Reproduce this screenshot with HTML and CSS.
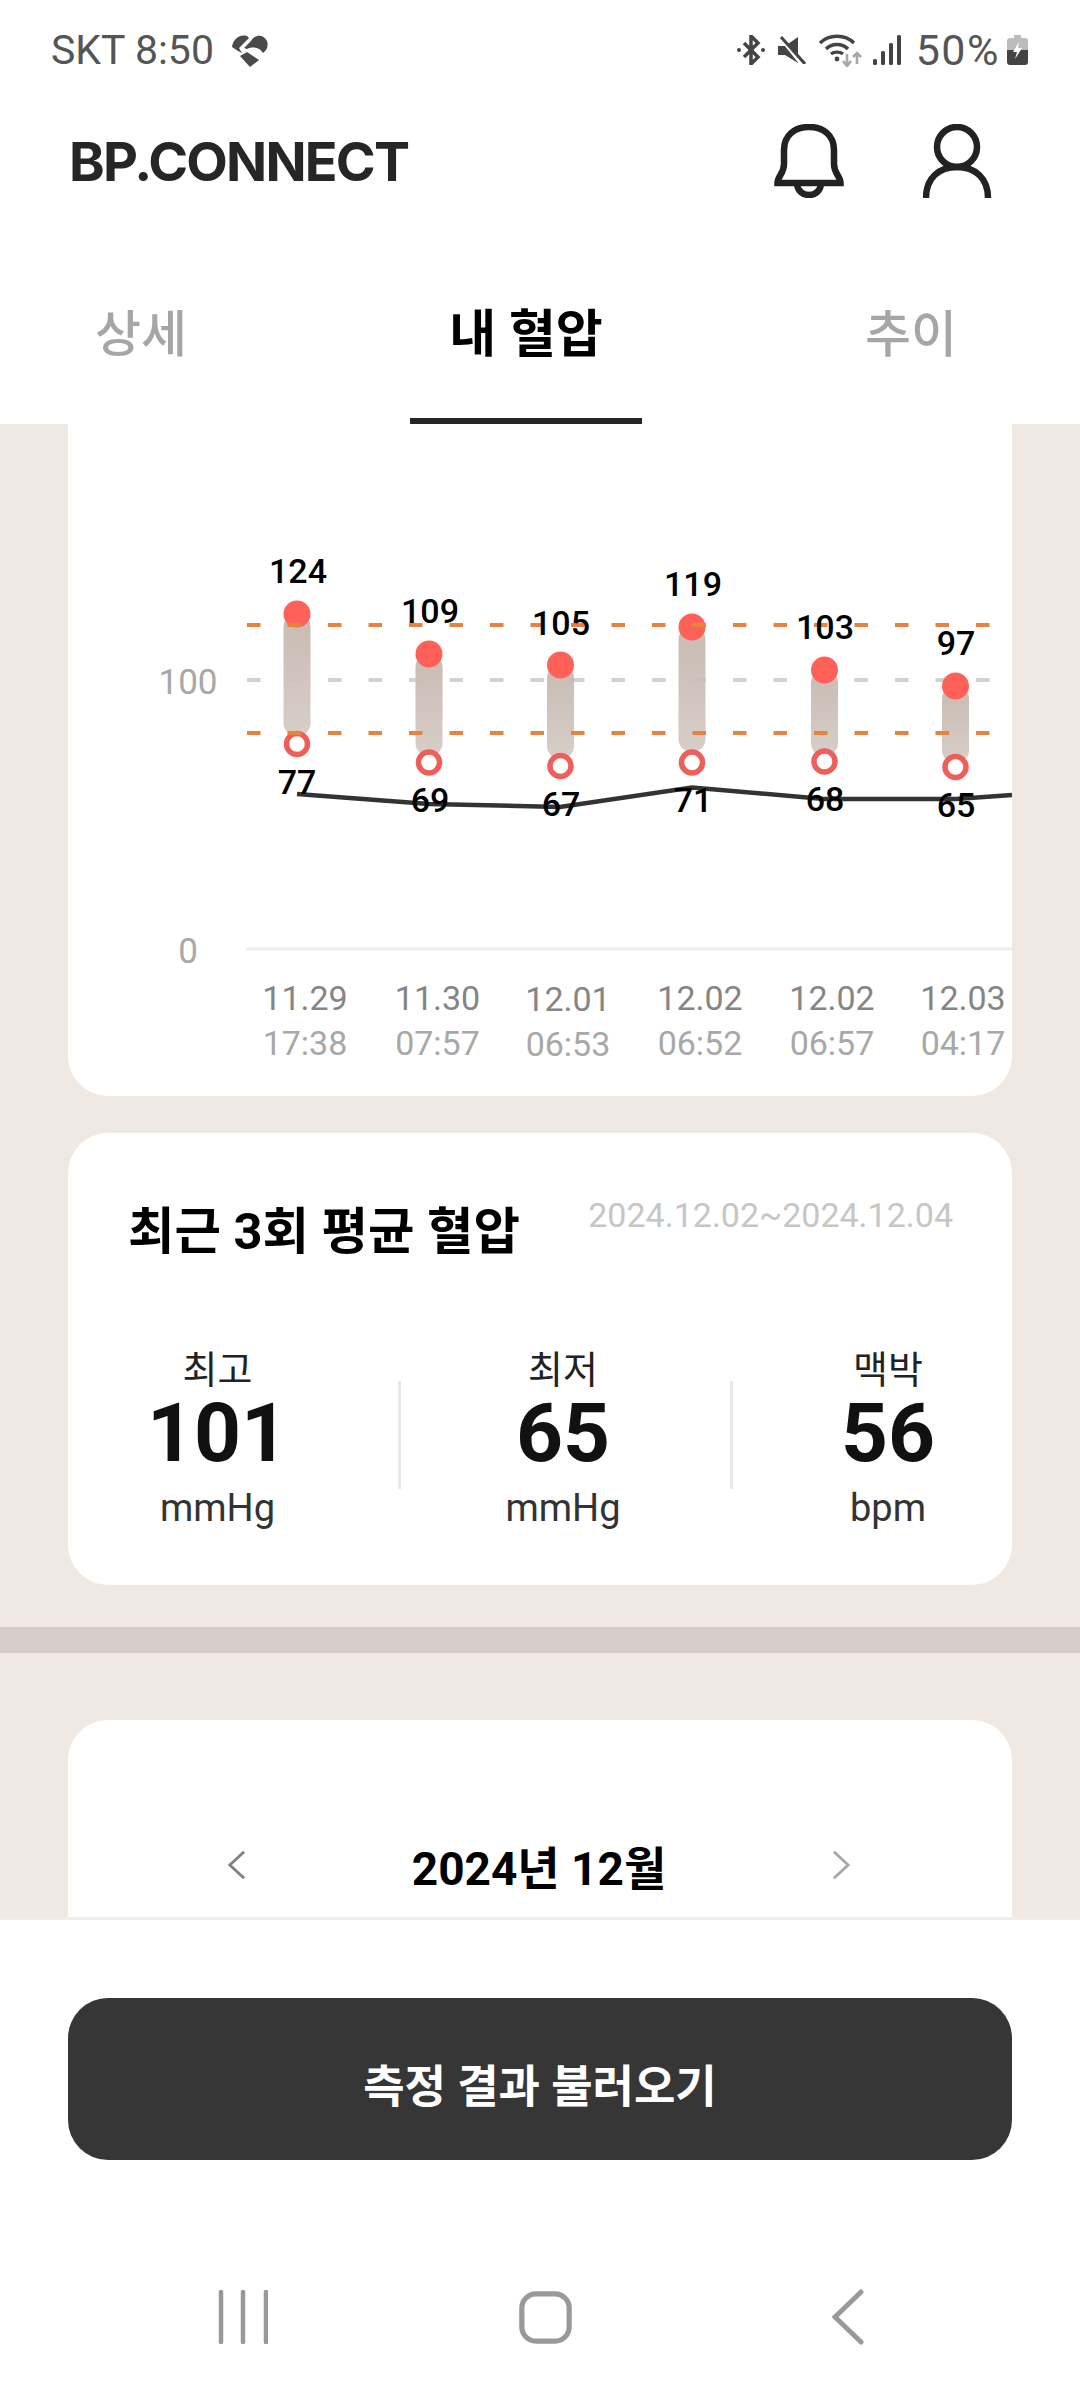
FILE: index.html
```html
<!DOCTYPE html>
<html lang="ko">
<head>
    <meta charset="UTF-8">
    <meta name="viewport" content="width=device-width, initial-scale=1.0">
    <title>BP.CONNECT - 내 혈압</title>
    <link rel="stylesheet" href="styles.css">
</head>
<body>
    <div class="status-bar">
        <div class="status-left">
            <span class="status-text">SKT 8:50</span>
            <svg class="icon-heart" viewBox="0 0 36 33">
                <path d="M0 13C1 5 8 0 15 2L17 4 7 14 10 19 6 17Z"/>
                <path d="M19 7C22 1 31-1 35 7 37 13 34 17 31 19 28 14 22 12 15 15L12 14Z"/>
                <path d="M8 22 15 18 27 26 18 33Z"/>
            </svg>
        </div>
        <div class="status-right">
            <svg class="icon-bt" viewBox="0 0 28 30">
                <path d="M7 8 21 22 14 29V1L21 8 7 22"/>
                <circle cx="2" cy="15" r="2"/>
                <circle cx="26" cy="15" r="2"/>
            </svg>
            <svg class="icon-mute" viewBox="0 0 29 28">
                <path class="solid" d="M1 10H8L21 1V27L8 19H1Z"/>
                <path class="cut" d="M1-1 25 29"/>
                <path class="strike" d="M4 1 28 28"/>
            </svg>
            <svg class="icon-wifi" viewBox="0 0 44 33">
                <path d="M1 9C10 0 26 0 35 9"/>
                <path d="M7 15C13 9 23 9 29 15"/>
                <path d="M12 20C15 17.5 21 17.5 24 20"/>
                <circle cx="18" cy="25" r="2.4"/>
                <path class="arrow" d="M28 20V32M24 27 28 32 32 27"/>
                <path class="arrow" d="M38 30V19M34 23 38 19 42 23"/>
            </svg>
            <svg class="icon-signal" viewBox="0 0 28 30">
                <rect x="0" y="24" width="4" height="6" rx="1.5"/>
                <rect x="8" y="16" width="4" height="14" rx="1.5"/>
                <rect x="16" y="8" width="4" height="22" rx="1.5"/>
                <rect x="24" y="0" width="4" height="30" rx="1.5"/>
            </svg>
            <span class="status-text status-pct">50%</span>
            <svg class="icon-battery" viewBox="0 0 21 30">
                <path class="batt-top" d="M7 0H14V3H18Q21 3 21 6V15H0V6Q0 3 3 3H7Z"/>
                <path class="batt-low" d="M0 15H21V27Q21 30 18 30H3Q0 30 0 27Z"/>
                <path class="batt-bolt" d="M12 7 6 17H10L8 24 15 13H11Z"/>
            </svg>
        </div>
    </div>

    <header class="app-header">
        <div class="logo">BP.CONNECT</div>
        <div class="header-icons">
            <svg class="icon-bell" viewBox="0 0 70 74">
                <path d="M3.5 59C3.5 52 10 50 10 40V26C10 11 21 3 35 3 49 3 60 11 60 26V40C60 50 66.5 52 66.5 59Z"/>
                <path d="M23 59C23 67 29 71 35 71 41 71 47 67 47 59"/>
            </svg>
            <svg class="icon-user" viewBox="0 0 70 74">
                <circle cx="34" cy="23" r="20"/>
                <path d="M3 74C3 54 16 43 34 43 52 43 65 54 65 74"/>
            </svg>
        </div>
    </header>

    <nav class="tabs">
        <div class="tab">상세</div>
        <div class="tab active">내 혈압</div>
        <div class="tab">추이</div>
    </nav>

    <main class="content">
        <section class="card chart-card">
            <svg class="chart" viewBox="68 384 944 712">
                <defs>
                    <linearGradient id="barFill" x1="0" y1="0" x2="0" y2="1">
                        <stop offset="0" stop-color="#c4b7ae"/>
                        <stop offset="1" stop-color="#d5cbc5"/>
                    </linearGradient>
                </defs>

                <text class="axis-label" x="188" y="694">100</text>
                <text class="axis-label" x="188" y="963">0</text>
                <line class="axis-line" x1="246" y1="949" x2="1012" y2="949"/>
                <line class="grid-grey" x1="247" y1="680" x2="990" y2="680"/>

                <rect class="bar" x="283.5" y="614" width="27" height="122" rx="13"/>
                <rect class="bar" x="415.5" y="654" width="27" height="102" rx="13"/>
                <rect class="bar" x="547" y="665" width="27" height="94" rx="13"/>
                <rect class="bar" x="678.5" y="627" width="27" height="125" rx="13"/>
                <rect class="bar" x="811" y="670" width="27" height="86" rx="13"/>
                <rect class="bar" x="942" y="686" width="27" height="77" rx="13"/>

                <circle class="dot-high" cx="297" cy="614" r="13.5"/>
                <circle class="dot-high" cx="429" cy="654" r="13.5"/>
                <circle class="dot-high" cx="560.5" cy="665" r="13.5"/>
                <circle class="dot-high" cx="692" cy="627" r="13.5"/>
                <circle class="dot-high" cx="824.5" cy="670" r="13.5"/>
                <circle class="dot-high" cx="955.5" cy="686" r="13.5"/>

                <circle class="dot-low" cx="297" cy="744" r="10.5"/>
                <circle class="dot-low" cx="429" cy="762.5" r="10.5"/>
                <circle class="dot-low" cx="560.5" cy="766" r="10.5"/>
                <circle class="dot-low" cx="692" cy="762.5" r="10.5"/>
                <circle class="dot-low" cx="824.5" cy="761.5" r="10.5"/>
                <circle class="dot-low" cx="955.5" cy="767" r="10.5"/>

                <line class="grid-orange" x1="247" y1="625" x2="990" y2="625"/>
                <line class="grid-orange" x1="247" y1="733" x2="990" y2="733"/>

                <polyline class="pulse-line" points="297,794 429,804 560,807 692,787.5 824,799 956,799 1012,795"/>

                <text class="value-label" x="298" y="583">124</text>
                <text class="value-label" x="430" y="623">109</text>
                <text class="value-label" x="561" y="635">105</text>
                <text class="value-label" x="693" y="596">119</text>
                <text class="value-label" x="825" y="639">103</text>
                <text class="value-label" x="956" y="655">97</text>

                <text class="value-label" x="297" y="794">77</text>
                <text class="value-label" x="430" y="812">69</text>
                <text class="value-label" x="561" y="816">67</text>
                <text class="value-label" x="693" y="812">71</text>
                <text class="value-label" x="825" y="811">68</text>
                <text class="value-label" x="956" y="817">65</text>

                <text class="date-label" x="305" y="1010">11.29</text>
                <text class="date-label" x="437.5" y="1010">11.30</text>
                <text class="date-label" x="568" y="1011">12.01</text>
                <text class="date-label" x="700" y="1010">12.02</text>
                <text class="date-label" x="832" y="1010">12.02</text>
                <text class="date-label" x="963" y="1010">12.03</text>

                <text class="time-label" x="305" y="1055">17:38</text>
                <text class="time-label" x="437.5" y="1055">07:57</text>
                <text class="time-label" x="568" y="1056">06:53</text>
                <text class="time-label" x="700" y="1055">06:52</text>
                <text class="time-label" x="832" y="1055">06:57</text>
                <text class="time-label" x="963" y="1055">04:17</text>
            </svg>
        </section>

        <section class="card average-card">
            <div class="average-head">
                <h2 class="average-title">최근 3회 평균 혈압</h2>
                <span class="average-range">2024.12.02~2024.12.04</span>
            </div>
            <div class="stats">
                <div class="stat stat-high">
                    <span class="stat-name">최고</span>
                    <span class="stat-value">101</span>
                    <span class="stat-unit">mmHg</span>
                </div>
                <div class="stat-divider"></div>
                <div class="stat stat-low">
                    <span class="stat-name">최저</span>
                    <span class="stat-value">65</span>
                    <span class="stat-unit">mmHg</span>
                </div>
                <div class="stat-divider"></div>
                <div class="stat stat-pulse">
                    <span class="stat-name">맥박</span>
                    <span class="stat-value">56</span>
                    <span class="stat-unit">bpm</span>
                </div>
            </div>
        </section>

        <div class="band"></div>

        <section class="card calendar-card">
            <div class="month-row">
                <svg class="chevron chevron-prev" viewBox="0 0 20 32"><path d="M18 2 3 16 18 30"/></svg>
                <h2 class="month-title">2024년 12월</h2>
                <svg class="chevron chevron-next" viewBox="0 0 20 32"><path d="M2 2 17 16 2 30"/></svg>
            </div>
        </section>
    </main>

    <div class="bottom-panel">
        <button class="load-button">측정 결과 불러오기</button>
        <div class="nav-bar">
            <svg class="nav-recents" viewBox="0 0 50 54">
                <path d="M3 2V52M25 2V52M48 2V52"/>
            </svg>
            <svg class="nav-home" viewBox="0 0 56 56">
                <rect x="3" y="3" width="50" height="50" rx="15"/>
            </svg>
            <svg class="nav-back" viewBox="0 0 32 56">
                <path d="M29 3 3 28 29 53"/>
            </svg>
        </div>
    </div>
</body>
</html>
```

FILE: styles.css
```css
* {
    box-sizing: border-box;
}
body {
    margin: 0;
    width: 1080px;
    height: 2400px;
    display: flex;
    flex-direction: column;
    overflow: hidden;
    background: #ffffff;
    color: #000000;
    font-family: Roboto, "Noto Sans CJK KR", sans-serif;
}
svg {
    display: block;
    flex: none;
}

/* status bar */
.status-bar {
    height: 100px;
    padding: 0 52px 0 51px;
    display: flex;
    justify-content: space-between;
    align-items: center;
}
.status-left,
.status-right {
    display: flex;
    align-items: center;
}
.status-text {
    font-size: 41px;
    color: #555555;
    line-height: 1;
}
.icon-heart {
    width: 36px;
    height: 33px;
    margin-left: 18px;
    fill: #4a4a4a;
}
.icon-bt {
    width: 28px;
    height: 30px;
    fill: #444444;
}
.icon-bt path {
    fill: none;
    stroke: #444444;
    stroke-width: 3.5;
}
.icon-mute {
    width: 29px;
    height: 28px;
    margin-left: 12px;
}
.icon-mute .solid {
    fill: #444444;
}
.icon-mute .cut {
    stroke: #ffffff;
    stroke-width: 3;
}
.icon-mute .strike {
    stroke: #444444;
    stroke-width: 3;
}
.icon-wifi {
    width: 44px;
    height: 33px;
    margin-left: 13px;
    fill: #444444;
}
.icon-wifi path {
    fill: none;
    stroke: #444444;
    stroke-width: 3.4;
}
.icon-wifi .arrow {
    stroke: #a8a8a8;
    stroke-width: 2.6;
}
.icon-signal {
    width: 28px;
    height: 30px;
    margin-left: 10px;
    fill: #444444;
}
.status-pct {
    margin-left: 15px;
    font-size: 43px;
    letter-spacing: 1.5px;
}
.icon-battery {
    width: 21px;
    height: 30px;
    margin-left: 7px;
}
.batt-top {
    fill: #bcbcbc;
}
.batt-low {
    fill: #444444;
}
.batt-bolt {
    fill: #ffffff;
}

/* app header */
.app-header {
    height: 122px;
    padding: 0 87px 0 69px;
    display: flex;
    justify-content: space-between;
    align-items: center;
}
.logo {
    font-family: Inter, sans-serif;
    font-size: 54px;
    font-weight: 700;
    letter-spacing: -1.8px;
    color: #262626;
}
.header-icons {
    display: flex;
    gap: 79px;
    margin-top: -1px;
}
.icon-bell,
.icon-user {
    width: 70px;
    height: 74px;
    fill: none;
    stroke: #222222;
    stroke-width: 6.5;
}

/* tabs */
.tabs {
    height: 202px;
    padding: 0 123px 0 95px;
    display: flex;
    justify-content: space-between;
}
.tab {
    padding-top: 14px;
    display: flex;
    justify-content: center;
    align-items: center;
    font-size: 50px;
    font-weight: 500;
    color: #a6a6a6;
}
.tab.active {
    width: 232px;
    padding-top: 20px;
    font-size: 51px;
    font-weight: 700;
    color: #000000;
    border-bottom: 6px solid #262626;
}

/* scroll area */
.content {
    flex: 1;
    min-height: 0;
    overflow: hidden;
    background: #f0e8e3;
}
.card {
    margin: 0 68px;
    background: #ffffff;
    border-radius: 40px;
}
.chart-card {
    margin-top: -40px;
    height: 712px;
}
.chart {
    width: 944px;
    height: 712px;
    border-radius: 40px;
}
.axis-label {
    font-size: 35px;
    fill: #a8a8a8;
    text-anchor: middle;
}
.axis-line {
    stroke: #eeeeee;
    stroke-width: 3;
}
.grid-grey {
    stroke: #d2d2d2;
    stroke-width: 4;
    stroke-dasharray: 13.5 27;
}
.grid-orange {
    stroke: #e8823c;
    stroke-width: 4;
    stroke-dasharray: 13.5 27;
}
.bar {
    fill: url(#barFill);
    opacity: 0.94;
}
.dot-high {
    fill: #ff6159;
}
.dot-low {
    fill: #ffffff;
    stroke: #ee5f5b;
    stroke-width: 5.5;
}
.pulse-line {
    fill: none;
    stroke: #333333;
    stroke-width: 4.5;
}
.value-label {
    font-size: 34px;
    font-weight: 500;
    fill: #000000;
    text-anchor: middle;
}
.date-label {
    font-size: 34px;
    fill: #858585;
    text-anchor: middle;
}
.time-label {
    font-size: 34px;
    fill: #a8a8a8;
    text-anchor: middle;
}

/* average card */
.average-card {
    margin-top: 37px;
    height: 452px;
    padding-top: 59px;
}
.average-head {
    padding: 0 59px 0 60px;
    display: flex;
    justify-content: space-between;
    align-items: flex-start;
}
.average-title {
    margin: 0;
    font-size: 50.5px;
    font-weight: 700;
    line-height: 80px;
}
.average-range {
    font-size: 34px;
    color: #c6c6c6;
    line-height: 46px;
}
.stats {
    margin-top: 73px;
    padding-left: 52px;
    display: flex;
    align-items: flex-start;
}
.stat {
    display: flex;
    flex-direction: column;
    align-items: center;
}
.stat-high {
    width: 195px;
    margin-right: 83px;
}
.stat-low {
    width: 324px;
    margin-right: 5px;
}
.stat-pulse {
    width: 248px;
    margin-left: 31px;
}
.stat-divider {
    width: 3px;
    height: 108px;
    margin-top: 36px;
    background: #e8e8e8;
}
.stat-name {
    font-size: 38px;
    line-height: 50px;
    color: #222222;
}
.stat-value {
    font-size: 82px;
    font-weight: 700;
    line-height: 76px;
    color: #111111;
}
.stat-unit {
    margin-top: 12px;
    font-size: 38px;
    line-height: 50px;
    color: #333333;
}

.band {
    height: 26px;
    margin-top: 42px;
    background: #d6ccc8;
}

/* calendar card */
.calendar-card {
    margin-top: 67px;
    height: 400px;
    padding-top: 116px;
}
.month-row {
    width: 624px;
    margin-left: 159px;
    display: flex;
    justify-content: space-between;
    align-items: center;
}
.month-title {
    margin: 0;
    font-size: 46px;
    font-weight: 700;
    line-height: 66px;
}
.chevron {
    width: 19px;
    height: 34px;
    margin-top: -9px;
    fill: none;
    stroke-width: 3;
}
.chevron-prev {
    stroke: #808080;
}
.chevron-next {
    stroke: #a8a8a8;
}

/* bottom panel */
.bottom-panel {
    height: 483px;
    flex: none;
    padding-top: 78px;
    border-top: 3px solid #eeeeee;
    background: #ffffff;
}
.load-button {
    display: block;
    width: 944px;
    height: 162px;
    margin: 0 68px;
    padding: 8px 0 0;
    border: none;
    border-radius: 40px;
    background: #363636;
    color: #ffffff;
    font-family: inherit;
    font-size: 45px;
    font-weight: 700;
}
.nav-bar {
    height: 54px;
    margin-top: 130px;
    padding: 0 216px 0 218px;
    display: flex;
    justify-content: space-between;
    align-items: center;
}
.nav-recents,
.nav-home,
.nav-back {
    fill: none;
    stroke: #999999;
    stroke-linecap: round;
}
.nav-recents {
    width: 50px;
    height: 54px;
    stroke-width: 4.5;
}
.nav-home {
    width: 53px;
    height: 53px;
    margin-right: 9px;
    stroke-width: 5.5;
}
.nav-back {
    width: 32px;
    height: 56px;
    stroke-width: 5;
}
```
